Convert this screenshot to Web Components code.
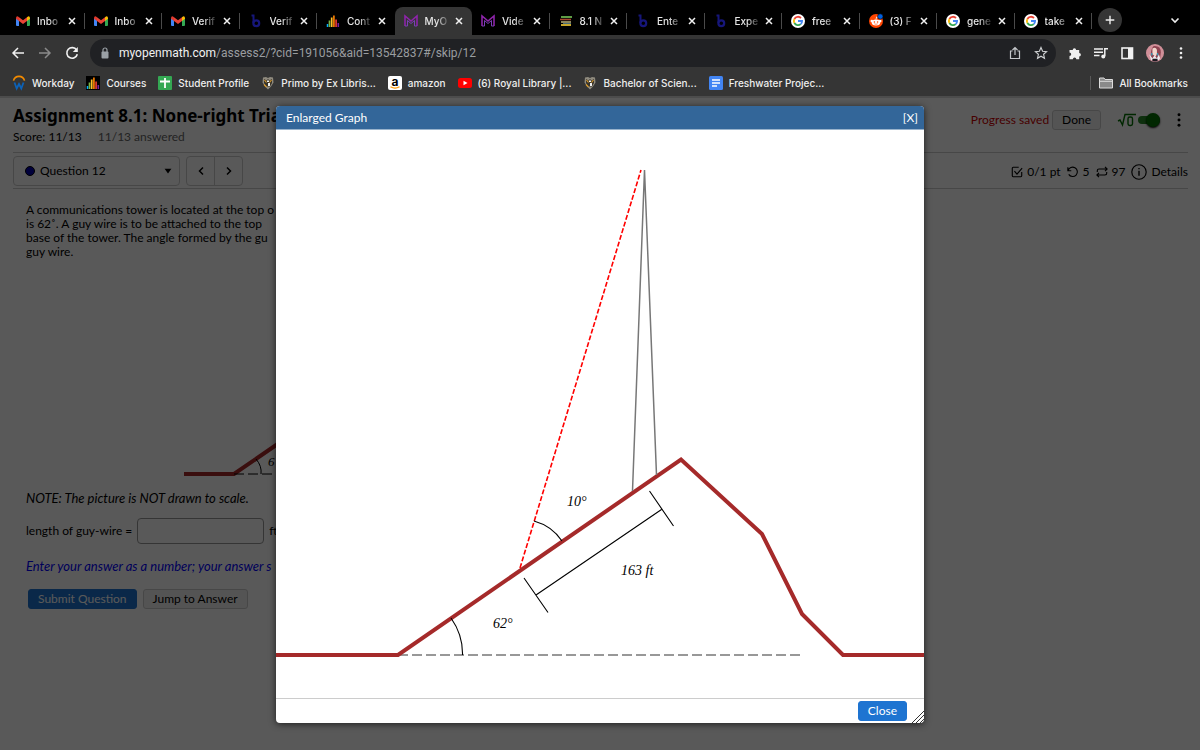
<!DOCTYPE html>
<html lang="en">
<head>
<meta charset="utf-8">
<title>MyOpenMath Assessment</title>
<style>
html,body{margin:0;min-height:100%}
body{background:#353535;font-family:Inter,Roboto,sans-serif}
</style>
</head>
<body>
<browser-window></browser-window>
<script>
const ICONS = {
gmail:`<path d="M0 4h3v8H1a1 1 0 0 1-1-1z" fill="#4285f4"/><path d="M14 4h-3v8h2a1 1 0 0 0 1-1z" fill="#34a853"/><path d="M3 3.200L7 6.300l4-3.100v3.700L7 10 3 6.900z" fill="#ea4335"/><path d="M0 4q.2-2.200 2-1.600L3 3.200v3.700L0 4.800z" fill="#e0392d"/><path d="M14 4q-.2-2.200-2-1.600L11 3.200v3.700L14 4.800z" fill="#fbbc04"/>`,
bright:`<path d="M2.500 1.500H4.500V9" stroke="#16167a" stroke-width="2" fill="none"/><circle cx="7.300" cy="9.300" r="2.900" stroke="#16167a" stroke-width="2.200" fill="none"/>`,
bars:`<rect width="14" height="14" fill="#000"/><path d="M1.500 13v-3" stroke="#00b0ff" stroke-width="1.500"/><path d="M3.500 13V6.500" stroke="#7cb342" stroke-width="1.700"/><path d="M5.700 13V3.500" stroke="#fbc02d" stroke-width="1.700"/><path d="M7.900 13V1.500" stroke="#f57c00" stroke-width="1.700"/><path d="M10.100 13V5.500" stroke="#e53935" stroke-width="1.700"/><path d="M12.300 13V9" stroke="#7b1fa2" stroke-width="1.500"/>`,
mom:`<path d="M1 12V2l6 5 6-5v10" fill="none" stroke="#8e24aa" stroke-width="1.600"/><path d="M3.500 12V6.500L7 9.500l3.500-3V12M1 12h2.500M10.500 12H13" fill="none" stroke="#7b3fb5" stroke-width="1"/>`,
books:`<path d="M2 3h11" stroke="#5d9c45" stroke-width="2"/><path d="M1 5.500h11" stroke="#a8452f" stroke-width="1.500"/><path d="M2 8h10" stroke="#bdb37a" stroke-width="1.500"/><path d="M2 11h10" stroke="#c7a62c" stroke-width="2"/><path d="M4 9.500h8" stroke="#486c78"/>`,
google:`<circle cx="7" cy="7" r="7" fill="#fff"/><g fill="none" stroke-width="1.800"><path d="M10 4A4.100 4.100 0 0 0 3.400 5" stroke="#ea4335"/><path d="M3.400 5a4 4 0 0 0 0 4" stroke="#fbbc05"/><path d="M3.400 9A4.100 4.100 0 0 0 9.700 10.100" stroke="#34a853"/><path d="M9.700 10.100A4 4 0 0 0 11.100 7H7" stroke="#4285f4"/></g>`,
reddit:`<circle cx="7" cy="7" r="7" fill="#ff4500"/><circle cx="2.800" cy="7" r="1.300" fill="#fff"/><circle cx="11.200" cy="7" r="1.300" fill="#fff"/><ellipse cx="7" cy="8.500" rx="4.300" ry="3" fill="#fff"/><circle cx="5.400" cy="8" r=".8" fill="#ff4500"/><circle cx="8.600" cy="8" r=".8" fill="#ff4500"/><path d="M5.300 9.800q1.700 1 3.400 0" stroke="#ff4500" fill="none" stroke-width=".6"/><path d="M7 5.500l.6-2.600 2 .5" stroke="#fff" fill="none" stroke-width=".8"/><circle cx="11.300" cy="2.500" r="2.700" fill="#0060df" stroke="#000" stroke-width=".6"/>`,
workday:`<path d="M1.500 4.600a5.700 5.700 0 0 1 11 0" fill="none" stroke="#f38b00" stroke-width="1.600"/><path d="M2.500 6.500l2.200 6L7 8l2.300 4.500 2.200-6" fill="none" stroke="#0c62b8" stroke-width="1.800"/>`,
sheets:`<rect width="14" height="14" rx="1" fill="#34a853"/><path d="M7 2v10M2 5.500h10" stroke="#fff" stroke-width="1.800"/>`,
shield:`<path d="M2 1.500l3-.5 2 1 2-1 3 .5.500 5-2.500 4-3 3-3-3-2.500-4z" fill="#8f8a7e"/><path d="M3 3l2.500 1.500L7 3l1.500 1.500L11 3v4l-2 3.500H5L3 7z" fill="#39352b"/><path d="M3.500 4l2 2.500M10.500 4l-2 2.500M3 8.500l2.500 2.500" stroke="#d99a2b" stroke-width="1.200"/><path d="M6 4.500h2v1.500H6zM7 7h2v3H7z" fill="#eee"/>`,
amazon:`<rect width="14" height="14" rx="2" fill="#fff"/><text x="7" y="9.500" text-anchor="middle" font-family="Inter,sans-serif" font-weight="700" font-size="12" fill="#000">a</text><path d="M2.500 10.800q4.500 2.600 9 0" fill="none" stroke="#ff9900" stroke-width="1.200"/>`,
youtube:`<rect y="2" width="14" height="10" rx="2.500" fill="#f00"/><path d="M5.500 4.800v4.400L9.500 7z" fill="#fff"/>`,
docs:`<rect width="14" height="14" rx="1.500" fill="#4285f4"/><path d="M3 4h8M3 7h8M3 10h5" stroke="#fff" stroke-width="1.400"/>`,
close:`<path d="M4 4l6 6M10 4l-6 6" stroke="#f1f1f1" stroke-width="1.500"/>`,
plus:`<path d="M7 2.700v8.600M2.700 7h8.600" stroke="#eee" stroke-width="1.400"/>`,
down:`<path d="M3.500 5.500L7 9l3.500-3.500" fill="none" stroke="#eee" stroke-width="1.600"/>`,
back:`<path d="M13 7H2M7 2L2 7l5 5" fill="none" stroke="#f1f1f1" stroke-width="1.500"/>`,
forward:`<path d="M1 7h11M7 2l5 5-5 5" fill="none" stroke="#8a8a8a" stroke-width="1.500"/>`,
reload:`<path d="M11.600 4A5.300 5.300 0 1 0 12.300 8.200" fill="none" stroke="#f1f1f1" stroke-width="1.600"/><path d="M12.800 1v5H7.800z" fill="#f1f1f1"/>`,
lock:`<rect x="3.500" y="5.500" width="7" height="7" rx="1" fill="#9aa0a6"/><path d="M5 6V4a2 2 0 0 1 4 0v2" fill="none" stroke="#9aa0a6" stroke-width="1.200"/>`,
share:`<path d="M4.500 5H2.500v7.500h9V5h-2M7 9V1.500M4.500 4L7 1.500 9.500 4" fill="none" stroke="#c4c7ca" stroke-width="1.200"/>`,
star:`<path d="M7 1.500l1.600 3.700 4 .4-3 2.700.9 4L7 10.200l-3.500 2.100.9-4-3-2.700 4-.4z" fill="none" stroke="#d0d2d4" stroke-width="1.100"/>`,
puzzle:`<path d="M1.500 4h3.200a1.700 1.700 0 1 1 3.400 0h3.100v3a1.700 1.700 0 1 1 0 3.400v2.900H8.300a1.700 1.700 0 0 0-3.400 0H1.500V10a1.700 1.700 0 0 0 0-3.400z" fill="#f1f1f1"/>`,
media:`<path d="M0 3h9M0 6.300h9M0 9.600h5.500M10.800 10V2.700H14" fill="none" stroke="#f1f1f1" stroke-width="1.500"/><circle cx="9.300" cy="10.400" r="2" fill="#f1f1f1"/>`,
panel:`<rect x="2" y="2" width="10.500" height="10.500" fill="none" stroke="#f1f1f1" stroke-width="1.600"/><path d="M8 2h4.500v10.500H8z" fill="#f1f1f1"/>`,
kebab:`<g fill="currentColor"><circle cx="7" cy="2.500" r="1.300"/><circle cx="7" cy="7" r="1.300"/><circle cx="7" cy="11.500" r="1.300"/></g>`,
avatar:`<circle cx="7" cy="7" r="7" fill="#d08f98"/><path d="M4 12Q3 4 6 1.500q5.500-.5 5.500 5L11 11q-4 3-7 1z" fill="#8e4350"/><path d="M5 3.500q2.500-1.500 3.500 1v3L7.500 10 5 8z" fill="#f1d5cc"/><path d="M2.500 8l2.500 3 1.500-2L8.500 11l1.500-3 1 3-1 1.500-6 .2z" fill="#eeeaee"/><path d="M4.500 7v2M9 7v2" stroke="#2f9ab8"/><path d="M5 11.500h4v1.800q-2 .7-4 0z" fill="#1c1720"/>`,
folder:`<path d="M.5 12V2H5l1 1.500h7.500V12z" fill="#8a8a8a" stroke="#ddd"/><path d="M.5 5.300h13" stroke="#ddd"/>`,
left:`<path d="M9 3.500L5.500 7 9 10.500" fill="none" stroke="#000" stroke-width="1.500"/>`,
right:`<path d="M5 3.500L8.500 7 5 10.500" fill="none" stroke="#000" stroke-width="1.500"/>`,
check:`<path d="M12.500 7v4.500a1 1 0 0 1-1 1h-9a1 1 0 0 1-1-1v-9a1 1 0 0 1 1-1H9M4 6l3 3.500 6-7" fill="none" stroke="#000" stroke-width="1.300"/>`,
undo:`<path d="M1 1.500v4h4M1.300 5.300A5.500 5.500 0 1 1 2 9.800" fill="none" stroke="#000" stroke-width="1.300"/>`,
repeat:`<path d="M10.500 1L13 3.500 10.500 6M1.500 7V5.500q0-2 2-2H13M3.500 13L1 10.500 3.500 8M12.500 7v1.500q0 2-2 2H1" fill="none" stroke="#000" stroke-width="1.300"/>`,
info:`<circle cx="7" cy="7" r="6.300" fill="none" stroke="#000"/><path d="M7 6v4.300M7 3.500v1.200" stroke="#000" stroke-width="1.200"/>`,
caret:`<path d="M3 4.500h8L7 10z" fill="#000"/>`,
root:`<path d="M0 8l2-1 2.500 5L7 1.500h11" fill="none" stroke="#007000" stroke-width="1.400"/><rect x="10" y="4" width="4.500" height="8.500" rx="1.700" fill="none" stroke="#007000" stroke-width="1.400"/>`
};
function define(name, html, setup){
  const t=document.createElement('template'); t.innerHTML=html;
  customElements.define(name,class extends HTMLElement{
    connectedCallback(){
      if(this.shadowRoot) return;
      this.attachShadow({mode:'open'}).append(t.content.cloneNode(true));
      if(setup) setup(this,this.shadowRoot);
    }
  });
}
define('ui-icon',`<style>:host{display:block;flex:none;width:var(--icon,14px);height:var(--icon,14px)}svg{display:block;width:100%;height:100%;overflow:visible}</style><svg aria-hidden="true"></svg>`,(el,r)=>{
  const s=r.querySelector('svg');
  s.setAttribute('viewBox',el.getAttribute('name')==='root'?'0 0 18 14':'0 0 14 14');
  s.innerHTML=ICONS[el.getAttribute('name')];
});

define('browser-tab',`<style>
:host{display:flex;align-items:center;flex:1 1 0;min-width:0;height:28px;box-sizing:border-box;padding:0 6px 0 9px;position:relative;color:#e6e6e6;font-size:10px;font-weight:500}
:host([divided])::after{content:"";position:absolute;right:0;top:6px;width:1px;height:16px;background:#4a4a4a}
:host([active]){background:#353535;border-radius:8px 8px 0 0}
span{flex:1;min-width:0;margin-left:7px;overflow:hidden;white-space:nowrap;-webkit-mask-image:linear-gradient(90deg,#000 12px,#0004 22px)}
button{border:0;background:none;padding:0;display:block}
</style><ui-icon></ui-icon><span><slot></slot></span><button aria-label="Close tab"><ui-icon name="close"></ui-icon></button>`,
(el,r)=>{const i=r.querySelector('ui-icon');const n=document.createElement('ui-icon');n.setAttribute('name',el.getAttribute('icon'));i.replaceWith(n)});

define('tab-strip',`<style>
:host{display:flex;align-items:flex-end;height:35px;background:#000;padding-left:7px}
.tabs{display:flex;flex:1;min-width:0}
.end{display:flex;align-items:center;justify-content:space-between;width:84px;height:28px;padding:0 18px 0 6px;margin-bottom:1px}
button{border:0;background:none;padding:0;width:24px;height:24px;border-radius:50%;display:grid;place-items:center}
.new{background:#353535}.list{width:14px}
</style><div class="tabs"><slot></slot></div><div class="end"><button class="new" aria-label="New tab"><ui-icon name="plus"></ui-icon></button><button class="list" aria-label="Search tabs"><ui-icon name="down"></ui-icon></button></div>`);

define('browser-toolbar',`<style>
:host{display:flex;align-items:center;height:35px;padding:0 14px 0 11px;color:#f1f1f1}
button{border:0;background:none;padding:0;display:block;color:inherit}
nav{display:flex;gap:13px;margin-right:11px}
.address{flex:1;min-width:0;display:flex;align-items:center;height:28px;border-radius:14px;background:#202124;padding:0 8px;box-sizing:border-box}
.url{flex:1;min-width:0;margin-left:7px;font:12px Roboto,Inter,sans-serif;color:#9a9da0;white-space:nowrap;overflow:hidden;outline:0}
b{font-weight:400;color:#f1f1f1}
.acts{display:flex;gap:12px}
.tools{display:flex;align-items:center;gap:12px;margin-left:12px}
.me{--icon:18px}.menu{width:10px;overflow:visible}.menu ui-icon{margin-left:-2px}
</style><nav><button aria-label="Back"><ui-icon name="back"></ui-icon></button><button aria-label="Forward"><ui-icon name="forward"></ui-icon></button><button aria-label="Reload"><ui-icon name="reload"></ui-icon></button></nav>
<div class="address"><ui-icon name="lock"></ui-icon><div class="url" role="textbox" contenteditable="true" spellcheck="false" aria-label="Address"><b>myopenmath.com</b>/assess2/?cid=191056&amp;aid=13542837#/skip/12</div><div class="acts"><button aria-label="Share"><ui-icon name="share"></ui-icon></button><button aria-label="Bookmark"><ui-icon name="star"></ui-icon></button></div></div>
<div class="tools"><button aria-label="Extensions"><ui-icon name="puzzle"></ui-icon></button><button aria-label="Media"><ui-icon name="media"></ui-icon></button><button aria-label="Side panel"><ui-icon name="panel"></ui-icon></button><button class="me" aria-label="Profile"><ui-icon name="avatar"></ui-icon></button><button class="menu" aria-label="Menu"><ui-icon name="kebab"></ui-icon></button></div>`);

define('bookmark-link',`<style>:host{display:block;flex:none}a{display:flex;align-items:center;gap:6px;color:#eee;text-decoration:none;font-size:10px;font-weight:500;white-space:nowrap}</style><a href="#"><ui-icon></ui-icon><span><slot></slot></span></a>`,
(el,r)=>{const n=document.createElement('ui-icon');n.setAttribute('name',el.getAttribute('icon'));r.querySelector('ui-icon').replaceWith(n)});
define('bookmark-bar',`<style>:host{display:flex;align-items:center;gap:12px;height:26px;padding:0 12px 0 12px;border-bottom:2px solid #4c4c4c}.all{margin-left:auto;border-left:1px solid #5a5a5a;padding-left:8px}</style><slot></slot><div class="all"><bookmark-link icon="folder">All Bookmarks</bookmark-link></div>`);

define('push-button',`<style>:host{display:inline-block}button{display:block;height:20px;padding:0 9px;border:1px solid #ccc;border-radius:3px;background:#f0f0f0;color:#000;font:inherit;line-height:18px;white-space:nowrap}:host([primary]) button{background:#1e74d1;border-color:#1e74d1;color:#fff}</style><button><slot></slot></button>`);

define('assess-header',`<style>
:host{display:flex;justify-content:space-between;height:48px;padding-top:6px;border-bottom:1px solid #ccc}
h1{margin:0;font:bold 17px/24px "Noto Sans",sans-serif;white-space:nowrap}
p{margin:1px 0 0;line-height:16px}p span{color:#666;margin-left:13px}
.right{display:flex;align-items:center;height:32px;white-space:nowrap}
.saved{color:#c00;margin-right:3px}
label{display:flex;align-items:center;gap:2px;margin-left:17px}
.root{--icon:14px;width:18px}
input{appearance:none;margin:0;width:22px;height:8px;border-radius:4px;background:#2a8a2a;position:relative}
input::after{content:"";position:absolute;right:0;top:-3px;width:14px;height:14px;border-radius:50%;background:#007000;box-shadow:0 1px 2px #000}
.menu{border:0;background:none;padding:0;margin:0 1px 0 11px;--icon:16px}
</style><div><h1>Assignment 8.1: None-right Tria</h1><p>Score: 11/13 <span>11/13 answered</span></p></div>
<div class="right"><span class="saved">Progress saved</span><push-button>Done</push-button><label aria-label="Equation editor"><ui-icon class="root" name="root"></ui-icon><input type="checkbox" checked></label><button class="menu" aria-label="Options"><ui-icon name="kebab"></ui-icon></button></div>`);

define('question-bar',`<style>
:host{display:flex;align-items:center;height:35px;border-bottom:1px solid #ccc}
.pick{display:flex;align-items:center;width:167px;height:30px;box-sizing:border-box;border:1px solid #ccc;border-radius:4px;padding:0 5px 0 11px;position:relative}
.pick i{width:8px;height:8px;border:1px solid #000;border-radius:50%;background:#00a}
select{appearance:none;flex:1;border:0;background:none;font:inherit;padding:0 0 0 5px;color:#000}
.pick ui-icon{--icon:12px}
.nav{display:flex;margin-left:6px;border:1px solid #ccc;border-radius:4px;height:28px}
.nav button{border:0;background:none;width:27px;padding:0;display:grid;place-items:center}
.nav button+button{border-left:1px solid #ccc;width:28px}
.info{margin-left:auto;display:flex;align-items:center;gap:4px;padding-top:2px;white-space:nowrap;--icon:12px}
.info span{margin-right:2px}
a{display:flex;align-items:center;gap:4px;color:#000;text-decoration:none;--icon:16px}
</style><label class="pick"><i></i><select aria-label="Question"><option>Question 12</option></select><ui-icon name="caret"></ui-icon></label><div class="nav"><button aria-label="Previous question"><ui-icon name="left"></ui-icon></button><button aria-label="Next question"><ui-icon name="right"></ui-icon></button></div>
<div class="info"><ui-icon name="check"></ui-icon><span>0/1 pt</span><ui-icon name="undo"></ui-icon><span>5</span><ui-icon name="repeat"></ui-icon><span>97</span><a href="#"><ui-icon name="info"></ui-icon>Details</a></div>`);

define('question-body',`<style>
:host{display:block;padding:14px 13px;white-space:nowrap}
p{margin:0;line-height:14px}
em{font-size:13px}
svg{display:block;margin:175px 0 0 158px;overflow:visible}
.note{margin-top:7px}
.answer{display:flex;align-items:center;gap:5px;margin-top:12px}
input{width:127px;height:26px;box-sizing:border-box;border:1px solid #999;border-radius:4px;background:#fff;font:inherit}
.hint{margin-top:15px;color:#00f}
.btns{display:flex;gap:6px;margin:15px 0 0 2px}
</style><p>A communications tower is located at the top o<br>is 62˚. A guy wire is to be attached to the top<br>base of the tower. The angle formed by the gu<br>guy wire.</p>
<svg width="92" height="50" viewBox="184 434 92 50" role="img" aria-label="Hill diagram"><path d="M184 474h50L282 441" fill="none" stroke="#a52a2a" stroke-width="4"/><path d="M234 474h42" stroke="#000" stroke-dasharray="10 4"/><path d="M256 459q6 7 5 15" fill="none" stroke="#000"/><text x="268" y="466" font-family="Liberation Serif,serif" font-style="italic" font-size="13">6</text></svg>
<p class="note"><em>NOTE: The picture is NOT drawn to scale.</em></p>
<div class="answer"><label for="len">length of guy-wire =</label><input id="len" type="text"><span>ft</span></div>
<p class="hint"><em>Enter your answer as a number; your answer s</em></p>
<div class="btns"><push-button primary>Submit Question</push-button><push-button>Jump to Answer</push-button></div>`);

define('hill-graph',`<style>:host{display:block}svg{display:block;width:100%;height:auto}text{font:italic 14px "Liberation Serif",serif}</style>
<svg viewBox="276 130 648 568" role="img" aria-label="Tower on a hill with guy wire">
<g fill="none"><path d="M398 655H802" stroke="#333" stroke-width="1.200" stroke-dasharray="10 4"/>
<path d="M276 655H398L681 459.500 762 534 802 614 843 655H924" stroke="#a52a2a" stroke-width="4"/>
<path d="M632.500 491L644.500 170 656.500 475" stroke="#777" stroke-width="1.500"/>
<path d="M520 568L641 170" stroke="#f00" stroke-width="1.600" stroke-dasharray="5 2"/>
<path d="M451 618Q463 635 462.500 655M534 521Q552 526 562 541M524 578L548 612.500M649.500 491L673.500 526M536 595L661.500 509.500" stroke="#000" stroke-width="1.100"/></g>
<text x="567" y="506">10°</text><text x="621" y="575">163 ft</text><text x="493" y="628">62°</text></svg>`);

define('graph-dialog',`<style>
:host{display:block;position:absolute;left:23%;width:54%;top:8px;background:#fff;border-radius:4px;box-shadow:0 1px 7px #000a;overflow:hidden}
header{display:flex;justify-content:space-between;align-items:center;height:23px;padding:0 6px 0 10px;background:#336699;color:#fff;border-bottom:1px solid #99b3cc}
h2{margin:0;font:inherit}
header button{border:0;background:none;color:inherit;font:inherit;padding:0}
footer{display:flex;justify-content:flex-end;align-items:center;height:24px;border-top:1px solid #ccc;padding-right:17px}
.grip{position:absolute;right:0;bottom:0}
</style><header><h2>Enlarged Graph</h2><button aria-label="Close">[X]</button></header><slot></slot><footer><push-button primary>Close</push-button></footer><svg class="grip" width="12" height="12" viewBox="0 0 12 12" aria-hidden="true"><path d="M0 12L12 0M4 12l8-8M8 12l4-4" stroke="#333"/></svg>`);

define('assess-page',`<style>
:host{display:block;flex:1;position:relative;background:#fff;color:#000;font:12px/16px var(--page)}
.sheet{padding:0 12px 0 13px}
.scrim{position:absolute;inset:0;background:#000000a6}
</style><div class="sheet"><assess-header></assess-header><question-bar></question-bar><question-body></question-body></div><div class="scrim"></div><graph-dialog role="dialog" aria-label="Enlarged Graph"><hill-graph></hill-graph></graph-dialog>`);

define('browser-window',`<style>
:host{display:flex;flex-direction:column;min-height:100vh;background:#353535;--page:Lato,"Noto Sans",sans-serif}
</style><tab-strip>
<browser-tab icon="gmail" divided>Inbo</browser-tab><browser-tab icon="gmail" divided>Inbo</browser-tab><browser-tab icon="gmail" divided>Verif</browser-tab><browser-tab icon="bright" divided>Verif</browser-tab><browser-tab icon="bars">Cont</browser-tab><browser-tab icon="mom" active>MyO</browser-tab><browser-tab icon="mom" divided>Vide</browser-tab><browser-tab icon="books" divided>8.1 N</browser-tab><browser-tab icon="bright" divided>Ente</browser-tab><browser-tab icon="bright" divided>Expe</browser-tab><browser-tab icon="google" divided>free</browser-tab><browser-tab icon="reddit" divided>(3) F</browser-tab><browser-tab icon="google" divided>gene</browser-tab><browser-tab icon="google" divided>take</browser-tab></tab-strip>
<browser-toolbar></browser-toolbar>
<bookmark-bar><bookmark-link icon="workday">Workday</bookmark-link><bookmark-link icon="bars">Courses</bookmark-link><bookmark-link icon="sheets">Student Profile</bookmark-link><bookmark-link icon="shield">Primo by Ex Libris...</bookmark-link><bookmark-link icon="amazon">amazon</bookmark-link><bookmark-link icon="youtube">(6) Royal Library |...</bookmark-link><bookmark-link icon="shield">Bachelor of Scien...</bookmark-link><bookmark-link icon="docs">Freshwater Projec...</bookmark-link></bookmark-bar>
<assess-page></assess-page>`);
</script>
</body>
</html>
